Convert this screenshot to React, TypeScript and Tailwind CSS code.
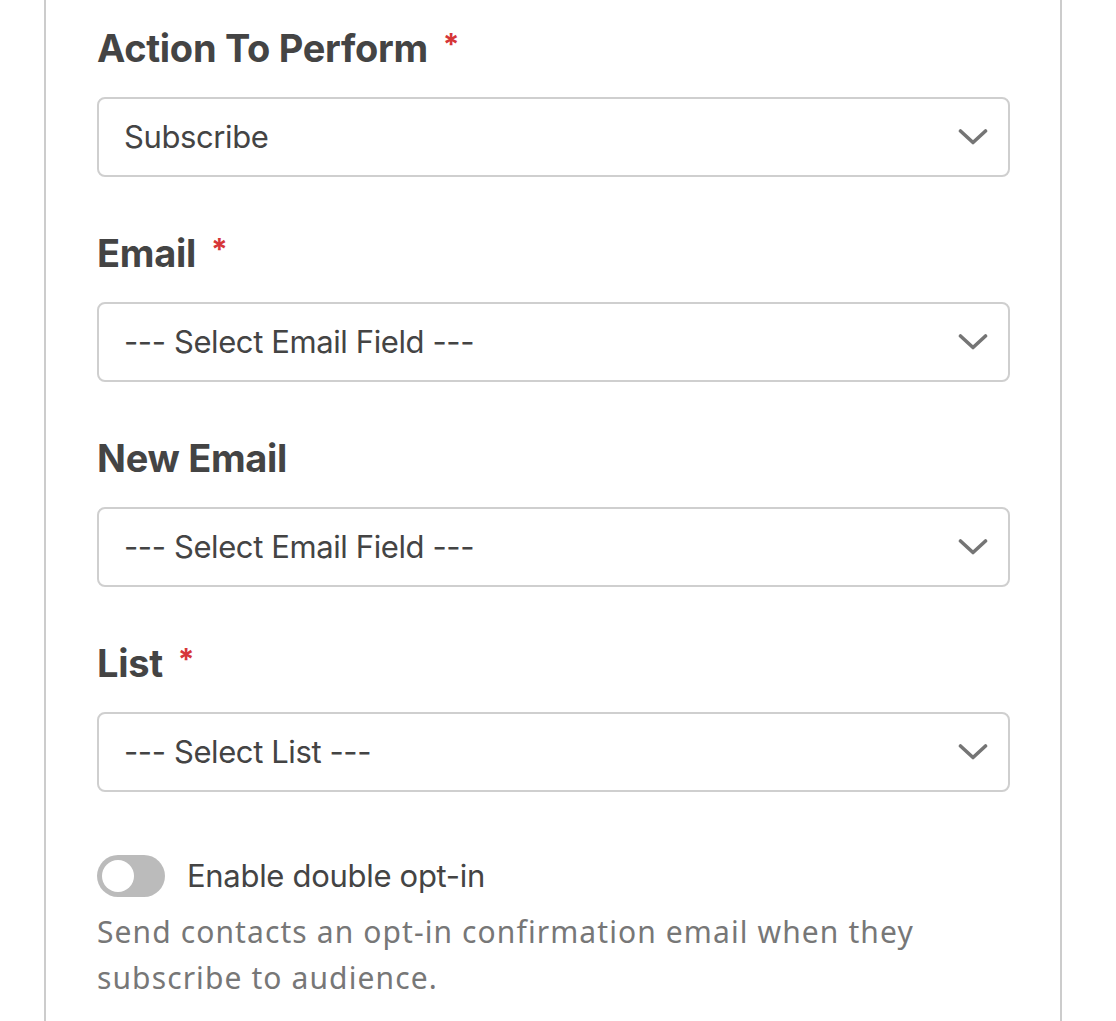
import React from 'react';

const fields = [
  { label: 'Action To Perform', required: true, value: 'Subscribe' },
  { label: 'Email', required: true, value: '--- Select Email Field ---' },
  { label: 'New Email', required: false, value: '--- Select Email Field ---' },
  { label: 'List', required: true, value: '--- Select List ---' },
];

const Chevron = () => (
  <svg width="30" height="18" viewBox="0 0 30 18" fill="none">
    <path d="M2.5 3L15 14.5L27.5 3" stroke="#757575" strokeWidth="3.6" strokeLinecap="round" strokeLinejoin="round" />
  </svg>
);

export default function App() {
  return (
    <div className="h-[1021px] w-[1116px] bg-white overflow-hidden font-['Inter',sans-serif]">
      <div className="ml-[44px] w-[1018px] h-full border-l-2 border-r-2 border-[#cccccc] pl-[51px] pr-[50px] pt-[24px]">
        {fields.map((f) => (
          <div key={f.label} className="mb-[52px]">
            <div className="flex items-center h-[48px] text-[38px] font-bold text-[#444444] tracking-[-0.3px]">
              {f.label}
              {f.required && <span className="ml-[15px] text-[#d63638] text-[30px] font-bold leading-none -mt-[8px]">*</span>}
            </div>
            <div className="mt-[25px] h-[80px] rounded-[8px] border-2 border-[#cfcfcf] flex items-center justify-between pl-[25px] pr-[20px] text-[31px] text-[#444444] tracking-[-0.4px]">
              <span>{f.value}</span>
              <Chevron />
            </div>
          </div>
        ))}
        {/* margin collapses with the field's mb-[52px] */}
        <div className="mt-[61px] flex items-center gap-[22px]">
          <div className="w-[68px] h-[42px] rounded-full bg-[#bbbbbb] flex items-center px-[5px]">
            <div className="w-[32px] h-[32px] rounded-full bg-white" />
          </div>
          <span className="text-[31px] text-[#444444] tracking-[-0.3px]">Enable double opt-in</span>
        </div>
        <p className="mt-[9px] text-[30px] leading-[46px] text-[#777777] font-['Noto_Sans',sans-serif] tracking-[1.1px] w-[880px]">
          Send contacts an opt-in confirmation email when they subscribe to audience.
        </p>
      </div>
    </div>
  );
}
